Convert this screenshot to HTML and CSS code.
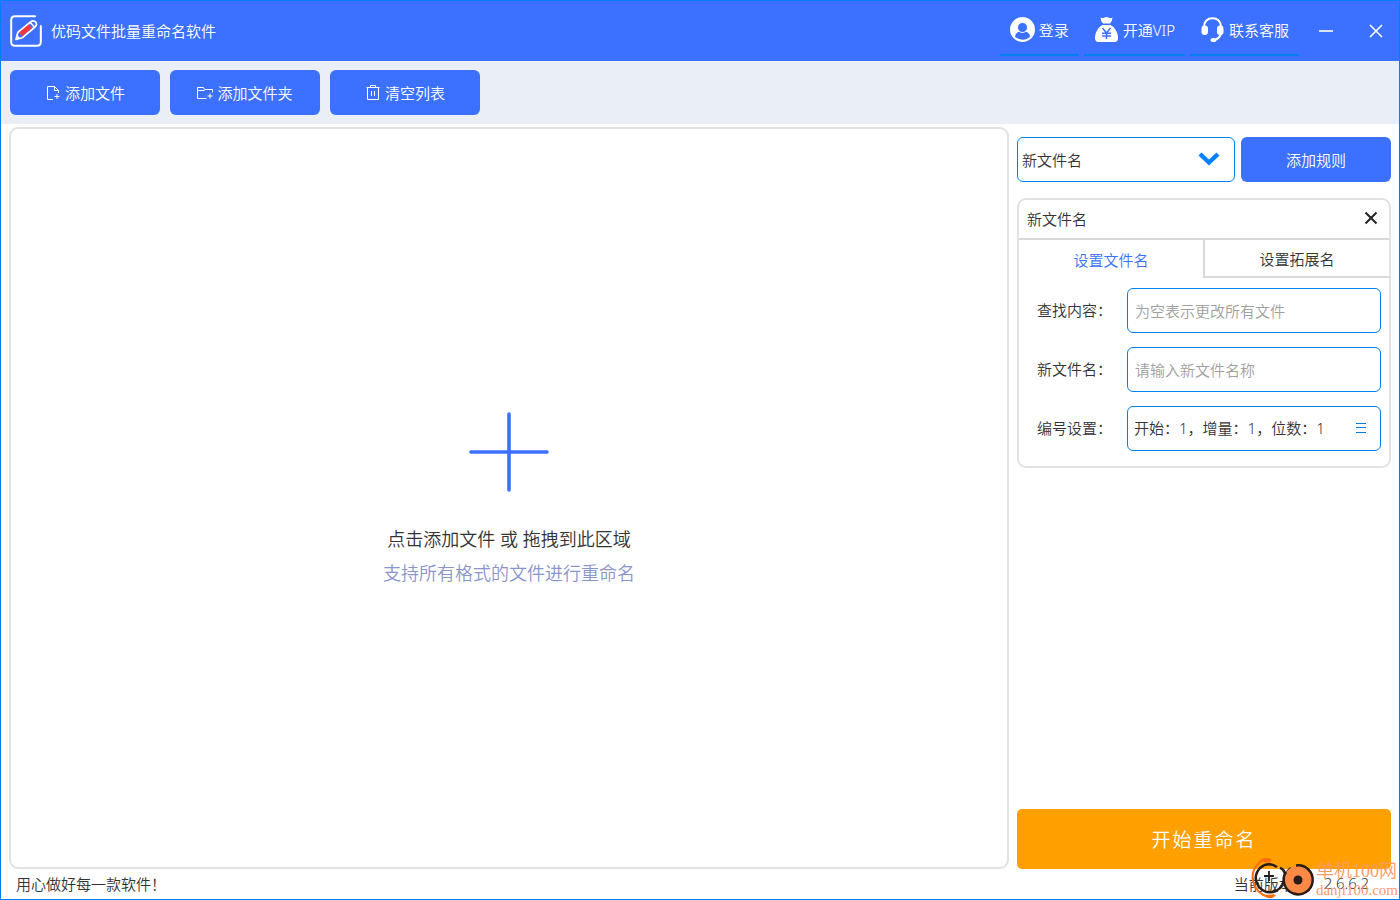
FILE: index.html
```html
<!DOCTYPE html>
<html lang="zh-CN">
<head>
<meta charset="utf-8">
<title>优码文件批量重命名软件</title>
<link rel="stylesheet" href="styles.css">
</head>
<body>
<div class="app">
  <header class="titlebar">
    <svg class="logo" viewBox="0 0 32 32" fill="none" aria-hidden="true">
      <path d="M25 1.200H5Q1.200 1.200 1.200 5V27Q1.200 30.800 5 30.800H27Q30.800 30.800 30.800 27V11" stroke="#fff" stroke-width="2" stroke-linecap="round"/>
      <path d="M6 24.500L7.800 17.500L20.500 7Q23.500 4.600 25.700 7Q27.600 9.600 25 12L12.400 22.700Z" stroke="#fff" stroke-width="1.700" stroke-linejoin="round"/>
      <path d="M10.600 19.400L20.200 11.200" stroke="#f8373c" stroke-width="4.800"/>
      <path d="M6 24.500L7 20L10.500 23.200Z" fill="#fff"/>
      <path d="M20.300 7.600L24.800 12.400" stroke="#fff" stroke-width="1.500"/>
    </svg>
    <h1 class="title">优码文件批量重命名软件</h1>
    <nav class="account">
      <button class="account-btn" type="button">
        <svg class="account-icon" viewBox="0 0 25 25" aria-hidden="true">
          <circle cx="12.500" cy="12.500" r="12.500" fill="#fff"/>
          <path d="M4.800 19.500Q6 14.800 10 14.500H15Q19 14.800 20.200 19.500Q17 22.700 12.500 22.700T4.800 19.500Z" fill="#3c70ff"/>
          <circle cx="12.500" cy="10.500" r="5" fill="#3c70ff" stroke="#fff"/>
        </svg>
        登录
      </button>
      <button class="account-btn" type="button">
        <svg class="account-icon" viewBox="0 0 25 25" aria-hidden="true">
          <path d="M6.500 0.500Q9 1.500 10.500 0.500Q12.500 -0.500 14.500 0.500Q16 1.500 18.500 0.500Q18.500 3.500 16 6.500H9Q6.500 3.500 6.500 0.500Z" fill="#fff"/>
          <path d="M8.500 8H16.500C21 10.500 24 15.500 24 21Q24 25 20.500 25H4.500Q1 25 1 21C1 15.500 4 10.500 8.500 8Z" fill="#fff"/>
          <path d="M8.500 11L12.500 16L16.500 11M12.500 16V22M8 16.200H17M8 19H17" fill="none" stroke="#3c70ff" stroke-width="1.500"/>
        </svg>
        开通VIP
      </button>
      <button class="account-btn" type="button">
        <svg class="account-icon" viewBox="0 0 25 25" aria-hidden="true">
          <path d="M4 10Q4.500 1.200 12.500 1.200T21 10V16Q20 21.500 14.500 23" fill="none" stroke="#fff" stroke-width="2"/>
          <rect x="1.500" y="8.500" width="6.500" height="9.500" rx="3.200" fill="#fff"/>
          <rect x="17" y="8.500" width="6.500" height="9.500" rx="3.200" fill="#fff"/>
          <ellipse cx="13.500" cy="23" rx="3" ry="2" fill="#fff"/>
        </svg>
        联系客服
      </button>
    </nav>
    <button class="window-btn" type="button" aria-label="最小化">
      <svg class="window-icon" viewBox="0 0 14 14" aria-hidden="true"><path d="M0 7H14" stroke="#fff" stroke-width="1.600"/></svg>
    </button>
    <button class="window-btn" type="button" aria-label="关闭">
      <svg class="window-icon" viewBox="0 0 14 14" aria-hidden="true"><path d="M1 1L13 13M13 1L1 13" stroke="#fff" stroke-width="1.600"/></svg>
    </button>
  </header>

  <div class="toolbar">
    <button class="primary-btn" type="button">
      <svg class="tool-icon" viewBox="0 0 16 16" fill="none" stroke="#fff" aria-hidden="true"><path d="M8 14.500H2.500V1.500H9.500L13.500 5.500V8M9.500 1.500V5.500H13.500M12 9V14M9.500 11.500H14.500"/></svg>
      添加文件
    </button>
    <button class="primary-btn" type="button">
      <svg class="tool-icon" viewBox="1 0 16 16" fill="none" stroke="#fff" aria-hidden="true"><path d="M10.500 13.500H1.500V2.500H7.500L8.500 4.500H16.500V7.500M1.500 5.500H8.500M14 8.500V13.500M11.500 11H16.500"/></svg>
      添加文件夹
    </button>
    <button class="primary-btn" type="button">
      <svg class="tool-icon" viewBox="0 0 16 16" fill="none" stroke="#fff" aria-hidden="true"><path d="M1.500 2.500H14.500M5.500 2V0.500H10.500V2M2.500 3V14.500H13.500V3M6.500 6V11M9.500 6V11"/></svg>
      清空列表
    </button>
  </div>

  <main class="workspace">
    <button class="dropzone" type="button">
      <svg class="plus" viewBox="0 0 80 80" aria-hidden="true"><path d="M40 2V78M2 40H78" stroke="#3c70ff" stroke-width="3.600" stroke-linecap="round"/></svg>
      <span class="drop-title">点击添加文件 或 拖拽到此区域</span>
      <span class="drop-hint">支持所有格式的文件进行重命名</span>
    </button>

    <aside class="side">
      <div class="rule-picker">
        <div class="select-wrap">
          <select class="rule-select" aria-label="规则"><option>新文件名</option></select>
          <svg class="chevron" viewBox="0 0 22 14" aria-hidden="true"><path d="M2 2L11 10.500L20 2" fill="none" stroke="#0080ff" stroke-width="4.400"/></svg>
        </div>
        <button class="primary-btn" type="button">添加规则</button>
      </div>

      <section class="card">
        <div class="card-head">
          <h2 class="card-title">新文件名</h2>
          <button class="card-close" type="button" aria-label="删除规则">
            <svg class="close-icon" viewBox="0 0 14 14" aria-hidden="true"><path d="M1.500 1.500L12.500 12.500M12.500 1.500L1.500 12.500" stroke="#222" stroke-width="2"/></svg>
          </button>
        </div>
        <div class="tabs" role="tablist">
          <button class="tab tab-active" type="button" role="tab" aria-selected="true">设置文件名</button>
          <button class="tab" type="button" role="tab" aria-selected="false">设置拓展名</button>
        </div>
        <form class="form">
          <label class="label" for="find">查找内容：</label>
          <input class="field" id="find" type="text" placeholder="为空表示更改所有文件">
          <label class="label" for="name">新文件名：</label>
          <input class="field" id="name" type="text" placeholder="请输入新文件名称">
          <label class="label" for="number">编号设置：</label>
          <button class="field number-field" id="number" type="button">
            <span>开始：1，增量：1，位数：1</span>
            <svg class="menu-icon" viewBox="0 0 12 12" aria-hidden="true"><path d="M1 1.500H11M1 5.500H11M1 10.500H11" stroke="#0078e8"/></svg>
          </button>
        </form>
      </section>

      <button class="start-btn" type="button">开始重命名</button>
    </aside>
  </main>

  <footer class="status">
    <span>用心做好每一款软件！</span>
    <span class="version"><span>当前版本：</span><span>2.6.6.2</span></span>
  </footer>

  <div class="watermark">
    <svg class="mark-logo" viewBox="0 0 64 42" fill="none" aria-hidden="true">
      <path d="M20 3Q12 0 7 7Q0 14 2 24Q5 37 18 40L23 38" stroke="#ff6d10" stroke-width="2"/>
      <path d="M10 6Q14 0 21 3L18 6Q13 4 10 6ZM14 38Q20 37 25 38Q22 43 14 40Z" fill="#ff6d10"/>
      <path d="M26 10Q17 4 9 11Q1 20 8 30Q15 38 25 34Q29 32 31 28" stroke="#2a1c18" stroke-width="2.500"/>
      <path d="M18 14V24M13 19H23" stroke="#2a1c18" stroke-width="1.800"/>
      <path d="M29 11Q33 12 34 17M40 11Q36 14 34 20Q33 24 31 28" stroke="#2a1c18" stroke-width="2.500"/>
      <circle cx="47" cy="23" r="14" fill="#ff8a48"/>
      <path d="M45 8.500A14.500 14.500 0 1 1 35 15" stroke="#2a1c18" stroke-width="2.500"/>
      <circle cx="47" cy="23" r="4.500" fill="#2a1c18"/>
    </svg>
    <div class="mark-text">
      <span class="mark-name">单机100网</span>
      <span class="mark-site">danji100.com</span>
    </div>
  </div>
</div>
</body>
</html>
```

FILE: styles.css
```css
* {
  box-sizing: border-box;
}

body {
  margin: 0;
  font-family: "Noto Sans", "Noto Sans CJK SC", sans-serif;
  font-size: 15px;
  font-weight: 350;
  color: #333;
}

button,
input,
select {
  margin: 0;
  font: inherit;
  color: inherit;
}

button {
  padding: 0;
  border: 0;
  background: none;
  cursor: pointer;
}

svg {
  flex: none;
}

.app {
  position: relative;
  display: flex;
  flex-direction: column;
  min-height: 100vh;
  border: 1px solid #0080f0;
  background: #fff;
}

.titlebar {
  display: flex;
  align-items: center;
  height: 60px;
  padding-left: 9px;
  background: #3c70ff;
  color: #fff;
}

.logo {
  width: 32px;
  height: 32px;
}

.title {
  margin: 0 auto 0 9px;
  padding-bottom: 2px;
  font-size: 15px;
  font-weight: inherit;
}

.account {
  display: flex;
  gap: 5px;
}

.account-btn {
  display: flex;
  align-items: center;
  gap: 4px;
  height: 50px;
  padding: 0 10px 2px;
  border-bottom: 2px solid #0080f0;
}

.account-icon {
  width: 25px;
  height: 25px;
}

.window-btn {
  display: flex;
  align-items: center;
  justify-content: flex-end;
  width: 50px;
  height: 50px;
  padding-right: 16px;
}

.window-icon,
.close-icon {
  width: 14px;
  height: 14px;
}

.toolbar {
  display: flex;
  gap: 10px;
  padding: 9px;
  background: #eaeef7;
}

.primary-btn {
  display: flex;
  align-items: center;
  justify-content: center;
  gap: 4px;
  width: 150px;
  height: 45px;
  border-radius: 6px;
  background: #3c70ff;
  color: #fff;
}

.tool-icon {
  width: 16px;
  height: 16px;
}

.workspace {
  flex: 1;
  display: flex;
  gap: 8px;
  padding: 3px 8px 0;
}

.dropzone {
  flex: 1;
  display: flex;
  flex-direction: column;
  align-items: center;
  justify-content: center;
  padding-top: 6px;
  border: 2px solid #e2e2e2;
  border-radius: 9px;
  font-size: 18px;
  line-height: 34px;
}

.plus {
  width: 80px;
  height: 80px;
  margin-bottom: 30px;
}

.drop-hint {
  color: #8a95cc;
}

.side {
  display: flex;
  flex-direction: column;
  width: 374px;
  padding-top: 10px;
}

.rule-picker {
  display: flex;
  gap: 6px;
  margin-bottom: 16px;
}

.select-wrap {
  position: relative;
  flex: 1;
}

.rule-select {
  width: 100%;
  height: 45px;
  padding: 0 4px;
  border: 1px solid #0080f0;
  border-radius: 6px;
  background: #fff;
  appearance: none;
}

.chevron {
  position: absolute;
  top: 15px;
  right: 15px;
  width: 22px;
  height: 14px;
  pointer-events: none;
}

.card {
  border: 2px solid #e2e2e2;
  border-radius: 9px;
}

.card-head {
  display: flex;
  align-items: center;
  justify-content: space-between;
  height: 40px;
  padding: 0 11px 2px 8px;
  border-bottom: 2px solid #d9d9d9;
}

.card-title {
  margin: 0;
  font-size: 15px;
  font-weight: inherit;
}

.card-close {
  display: flex;
}

.tabs {
  display: flex;
}

.tab {
  flex: 1;
  height: 38px;
  border: solid #d9d9d9;
  border-width: 0 0 2px 2px;
}

.tab-active {
  border-width: 0;
  color: #3c70ff;
}

.form {
  display: grid;
  grid-template-columns: 90px 1fr;
  align-items: center;
  row-gap: 14px;
  padding: 10px 8px 15px 18px;
}

.label {
  padding-bottom: 2px;
}

.field {
  width: 100%;
  height: 45px;
  padding: 0 7px;
  border: 1px solid #0080f0;
  border-radius: 6px;
  background: #fff;
}

.field::placeholder {
  color: #a0a0a0;
  opacity: 1;
}

.number-field {
  display: flex;
  align-items: center;
  justify-content: space-between;
  padding: 0 13px 2px 6px;
}

.menu-icon {
  width: 12px;
  height: 12px;
}

.start-btn {
  height: 60px;
  margin-top: auto;
  border-radius: 5px;
  background: #ff9f00;
  color: #fff;
  font-size: 19px;
  letter-spacing: 2px;
}

.status {
  display: flex;
  align-items: center;
  justify-content: space-between;
  height: 30px;
  padding: 0 30px 2px 15px;
}

.version {
  display: flex;
  gap: 15px;
}

.watermark {
  position: absolute;
  right: 1px;
  bottom: 0;
  display: flex;
  align-items: flex-end;
  gap: 1px;
  pointer-events: none;
}

.mark-logo {
  width: 64px;
  height: 42px;
}

.mark-text {
  display: flex;
  flex-direction: column;
  color: #ff9a68;
}

.mark-name {
  font-family: "Liberation Serif", "Noto Sans CJK SC", serif;
  font-size: 18px;
  line-height: 20px;
}

.mark-site {
  font-family: "Liberation Serif", serif;
  font-size: 15px;
  line-height: 18px;
}
```
